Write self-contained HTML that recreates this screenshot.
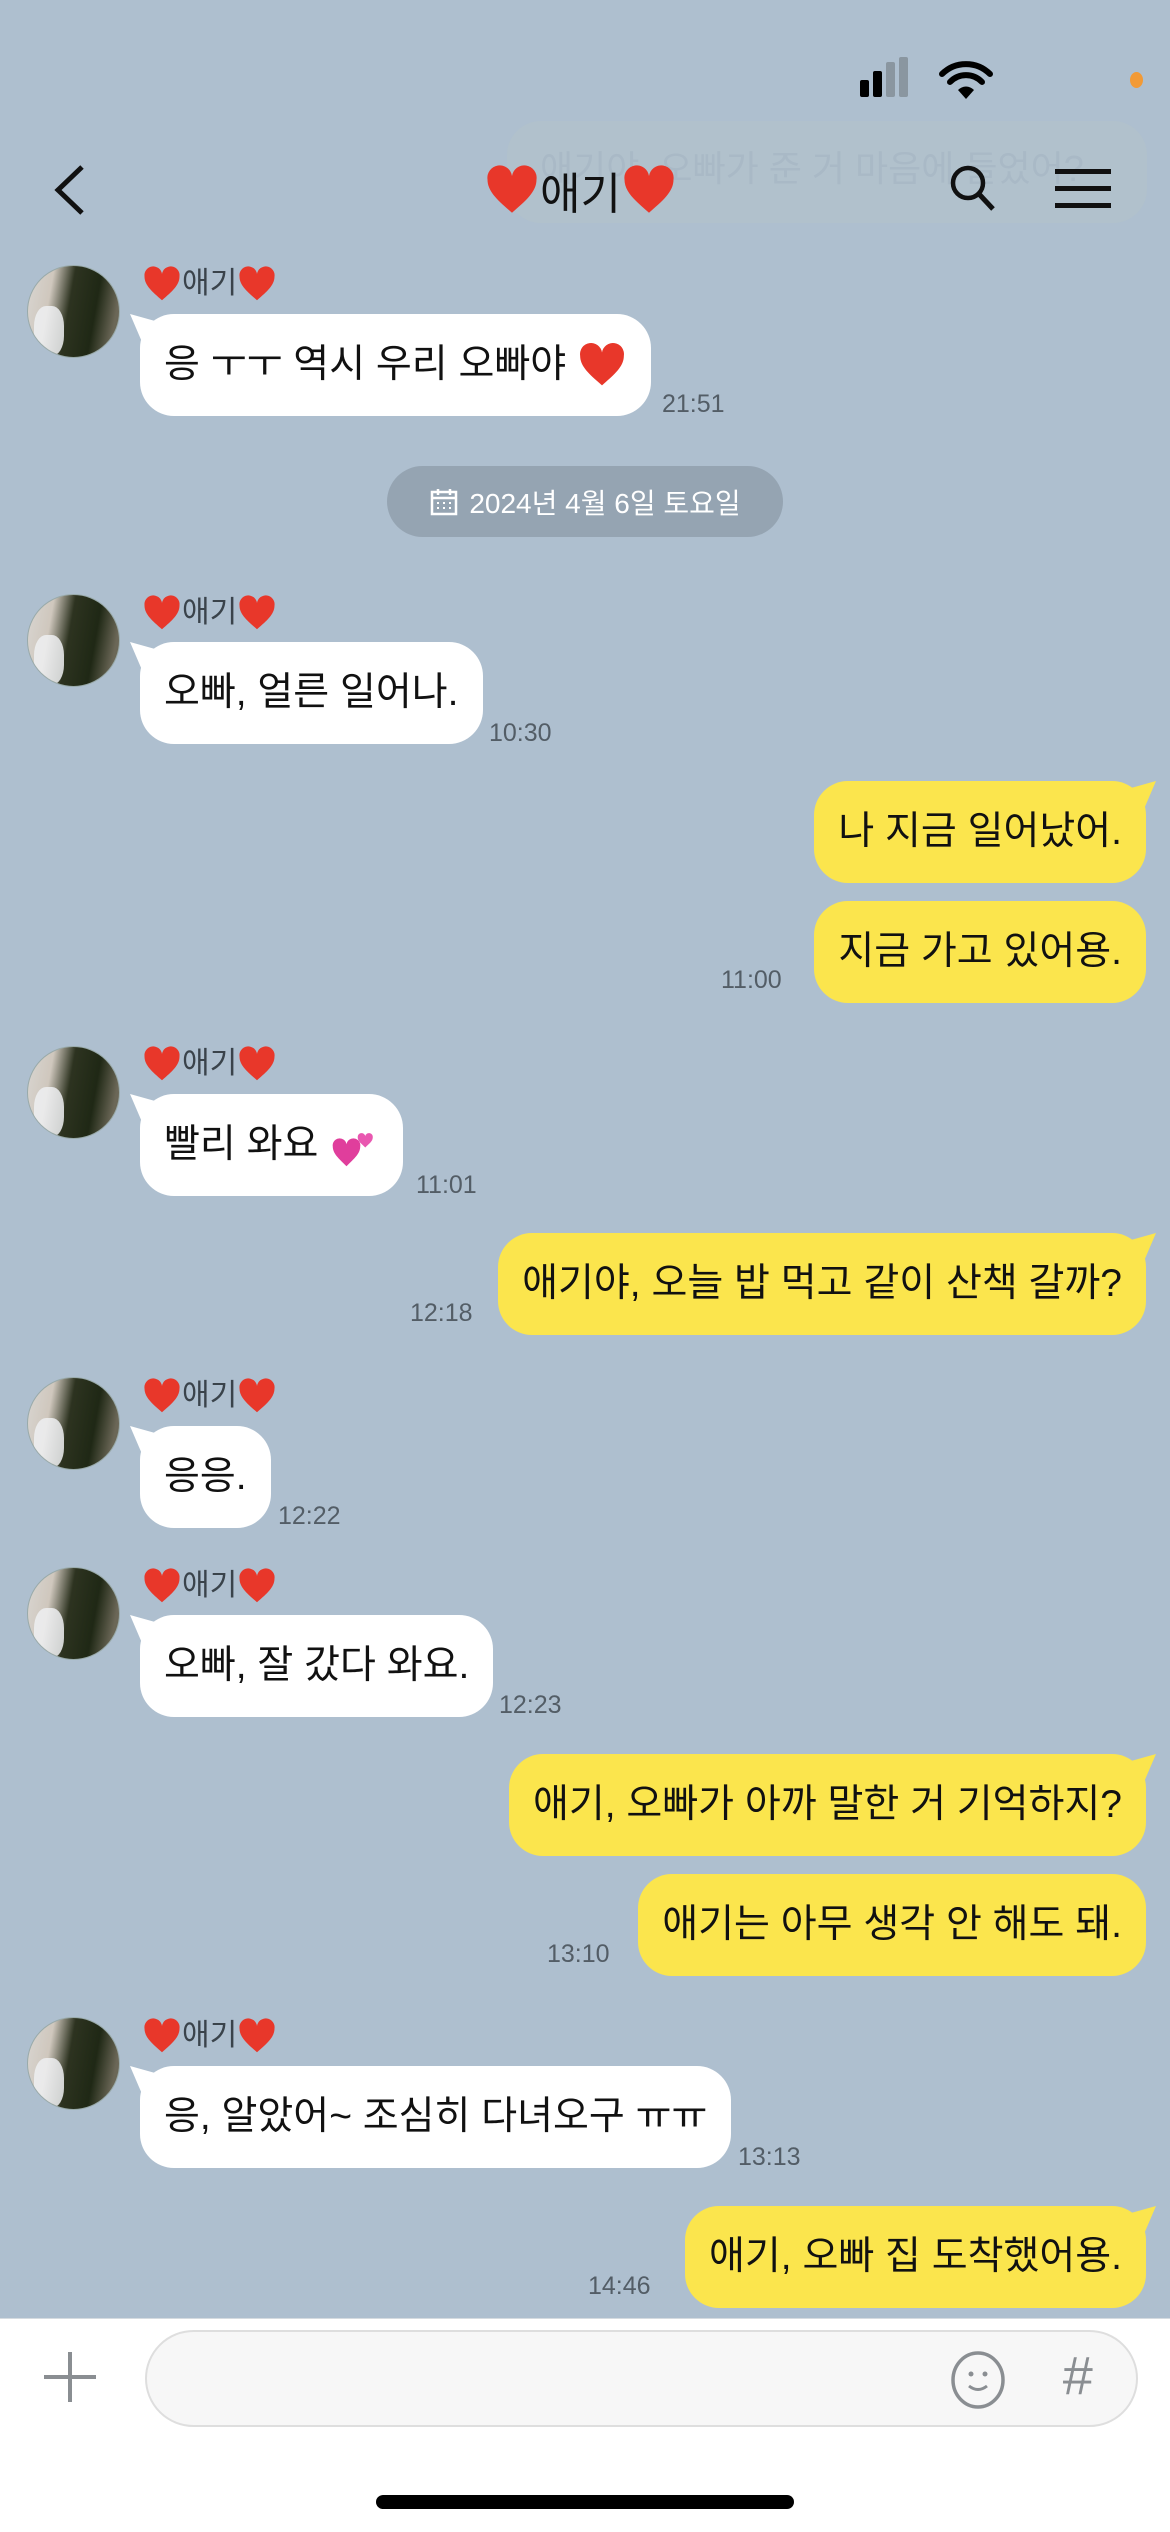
<!DOCTYPE html>
<html><head><meta charset="utf-8">
<style>
*{margin:0;padding:0;box-sizing:border-box}
body{width:1170px;height:2532px;background:#aebfcf;position:relative;overflow:hidden;font-family:"Liberation Sans","Noto Sans CJK KR",sans-serif;color:#111}
.a{position:absolute}
.av{position:absolute;left:27px;width:93px;height:93px;border-radius:50%;overflow:hidden;background:linear-gradient(100deg,#d9d6d2 0%,#cfc7bd 25%,#2d3320 45%,#1f2815 70%,#6b6757 90%);border:1px solid #9aa}
.av:after{content:"";position:absolute;left:6px;top:40px;width:30px;height:50px;border-radius:40%;background:#eef0f2;opacity:.85}
.nm{position:absolute;left:142px;font-size:30px;color:#3a434b;height:40px;line-height:40px;display:flex;align-items:center}
.b{position:absolute;height:102px;line-height:102px;font-size:39px;padding:0 24px;border-radius:34px;white-space:nowrap;display:flex;align-items:center}
.w{background:#fff;left:140px}
.y{background:#fbe54d;right:24px}
.tl:before{content:"";position:absolute;left:-10px;top:0;width:30px;height:28px;background:inherit;clip-path:polygon(0 0,100% 30%,100% 100%,40% 100%)}
.tr:before{content:"";position:absolute;right:-10px;top:0;width:30px;height:28px;background:inherit;clip-path:polygon(100% 0,0 30%,0 100%,60% 100%)}
.t{position:absolute;font-size:25px;color:#535d66}
svg.h{display:inline-block;vertical-align:middle}
</style></head><body>

<!-- ghost bubble -->
<div class="a" style="left:507px;top:121px;width:640px;height:102px;border-radius:34px;background:#b2c2ca;opacity:.7"></div>
<div class="a" style="left:540px;top:140px;font-size:36px;color:#a9b9c6">애기야, 오빠가 준 거 마음에 들었어?</div>

<!-- status bar -->
<div class="a" style="left:860px;top:80px;width:9px;height:17px;background:#000;border-radius:2px"></div>
<div class="a" style="left:873px;top:71px;width:9px;height:26px;background:#000;border-radius:2px"></div>
<div class="a" style="left:886px;top:62px;width:9px;height:35px;background:#8a96a0;border-radius:2px"></div>
<div class="a" style="left:899px;top:57px;width:9px;height:40px;background:#8a96a0;border-radius:2px"></div>
<svg class="a" style="left:938px;top:58px" width="56" height="42" viewBox="0 0 56 42"><path d="M4 16a34 34 0 0 1 48 0" stroke="#000" stroke-width="6" fill="none" stroke-linecap="round"/><path d="M12 24a22 22 0 0 1 32 0" stroke="#000" stroke-width="6" fill="none" stroke-linecap="round"/><path d="M20 32a11 11 0 0 1 16 0L28 41z" fill="#000"/></svg>
<div class="a" style="left:1130px;top:72px;width:13px;height:16px;border-radius:50%;background:#f29a36"></div>

<!-- header -->
<svg class="a" style="left:52px;top:163px" width="36" height="54" viewBox="0 0 36 54"><path d="M30 4L6 27l24 23" stroke="#111" stroke-width="5" fill="none"/></svg>
<div class="a" style="left:484px;top:160px;height:60px;display:flex;align-items:center;font-size:44px;color:#111">
<svg class="h" width="56" height="56" viewBox="0 0 32 32"><path d="M16 29C8 22 2 17 2 10a7 7 0 0 1 14-2 7 7 0 0 1 14 2c0 7-6 12-14 19z" fill="#e8372a"/></svg>
<span>애기</span>
<svg class="h" width="56" height="56" viewBox="0 0 32 32"><path d="M16 29C8 22 2 17 2 10a7 7 0 0 1 14-2 7 7 0 0 1 14 2c0 7-6 12-14 19z" fill="#e8372a"/></svg>
</div>
<svg class="a" style="left:948px;top:163px" width="50" height="50" viewBox="0 0 50 50"><circle cx="20" cy="20" r="15" stroke="#111" stroke-width="4.5" fill="none"/><path d="M31 31l14 15" stroke="#111" stroke-width="5"/></svg>
<div class="a" style="left:1055px;top:169px;width:56px;height:5px;background:#111"></div>
<div class="a" style="left:1055px;top:186px;width:56px;height:5px;background:#111"></div>
<div class="a" style="left:1055px;top:203px;width:56px;height:5px;background:#111"></div>

<!-- msg 1 -->
<div class="av" style="top:265px"></div>
<div class="nm" style="top:264px"><svg class="h" width="40" height="40" viewBox="0 0 32 32"><path d="M16 29C8 22 2 17 2 10a7 7 0 0 1 14-2 7 7 0 0 1 14 2c0 7-6 12-14 19z" fill="#e8372a"/></svg>애기<svg class="h" width="40" height="40" viewBox="0 0 32 32"><path d="M16 29C8 22 2 17 2 10a7 7 0 0 1 14-2 7 7 0 0 1 14 2c0 7-6 12-14 19z" fill="#e8372a"/></svg></div>
<div class="b w tl" style="top:314px">응 ㅜㅜ 역시 우리 오빠야&nbsp;<svg class="h" width="50" height="50" viewBox="0 0 32 32"><path d="M16 29C8 22 2 17 2 10a7 7 0 0 1 14-2 7 7 0 0 1 14 2c0 7-6 12-14 19z" fill="#e8372a"/></svg></div>
<div class="t" style="left:662px;top:390px">21:51</div>

<!-- date -->
<div class="a" style="left:387px;top:466px;width:396px;height:71px;border-radius:36px;background:#95a4b2;color:#fff;font-size:28px;display:flex;align-items:center;justify-content:center">
<svg width="30" height="30" viewBox="0 0 30 30" style="margin-right:10px"><rect x="3" y="5" width="24" height="22" stroke="#fff" stroke-width="2.5" fill="none"/><path d="M3 11h24M9 2v6M21 2v6" stroke="#fff" stroke-width="2.5"/><path d="M8 16h2M14 16h2M20 16h2M8 21h2M14 21h2M20 21h2" stroke="#fff" stroke-width="2"/></svg>2024년 4월 6일 토요일</div>

<!-- msg 2 -->
<div class="av" style="top:594px"></div>
<div class="nm" style="top:593px"><svg class="h" width="40" height="40" viewBox="0 0 32 32"><path d="M16 29C8 22 2 17 2 10a7 7 0 0 1 14-2 7 7 0 0 1 14 2c0 7-6 12-14 19z" fill="#e8372a"/></svg>애기<svg class="h" width="40" height="40" viewBox="0 0 32 32"><path d="M16 29C8 22 2 17 2 10a7 7 0 0 1 14-2 7 7 0 0 1 14 2c0 7-6 12-14 19z" fill="#e8372a"/></svg></div>
<div class="b w tl" style="top:642px">오빠, 얼른 일어나.</div>
<div class="t" style="left:489px;top:719px">10:30</div>

<div class="b y tr" style="top:781px">나 지금 일어났어.</div>
<div class="b y" style="top:901px">지금 가고 있어용.</div>
<div class="t" style="left:721px;top:966px">11:00</div>

<!-- msg 3 -->
<div class="av" style="top:1046px"></div>
<div class="nm" style="top:1044px"><svg class="h" width="40" height="40" viewBox="0 0 32 32"><path d="M16 29C8 22 2 17 2 10a7 7 0 0 1 14-2 7 7 0 0 1 14 2c0 7-6 12-14 19z" fill="#e8372a"/></svg>애기<svg class="h" width="40" height="40" viewBox="0 0 32 32"><path d="M16 29C8 22 2 17 2 10a7 7 0 0 1 14-2 7 7 0 0 1 14 2c0 7-6 12-14 19z" fill="#e8372a"/></svg></div>
<div class="b w tl" style="top:1094px">빨리 와요&nbsp;<svg class="h" width="50" height="50" viewBox="0 0 40 40"><path d="M14 37C8 31 3 27 3 21a5.5 5.5 0 0 1 11-1.5A5.5 5.5 0 0 1 25 21c0 6-5 10-11 16z" fill="#e03e9c"/><path d="M29 22c-3-3-6-5-6-8a3 3 0 0 1 6-1 3 3 0 0 1 6 1c0 3-3 5-6 8z" fill="#e957b0"/></svg></div>
<div class="t" style="left:416px;top:1171px">11:01</div>

<div class="b y tr" style="top:1233px">애기야, 오늘 밥 먹고 같이 산책 갈까?</div>
<div class="t" style="left:410px;top:1299px">12:18</div>

<!-- msg 4 -->
<div class="av" style="top:1377px"></div>
<div class="nm" style="top:1376px"><svg class="h" width="40" height="40" viewBox="0 0 32 32"><path d="M16 29C8 22 2 17 2 10a7 7 0 0 1 14-2 7 7 0 0 1 14 2c0 7-6 12-14 19z" fill="#e8372a"/></svg>애기<svg class="h" width="40" height="40" viewBox="0 0 32 32"><path d="M16 29C8 22 2 17 2 10a7 7 0 0 1 14-2 7 7 0 0 1 14 2c0 7-6 12-14 19z" fill="#e8372a"/></svg></div>
<div class="b w tl" style="top:1426px">응응.</div>
<div class="t" style="left:278px;top:1502px">12:22</div>

<!-- msg 5 -->
<div class="av" style="top:1567px"></div>
<div class="nm" style="top:1566px"><svg class="h" width="40" height="40" viewBox="0 0 32 32"><path d="M16 29C8 22 2 17 2 10a7 7 0 0 1 14-2 7 7 0 0 1 14 2c0 7-6 12-14 19z" fill="#e8372a"/></svg>애기<svg class="h" width="40" height="40" viewBox="0 0 32 32"><path d="M16 29C8 22 2 17 2 10a7 7 0 0 1 14-2 7 7 0 0 1 14 2c0 7-6 12-14 19z" fill="#e8372a"/></svg></div>
<div class="b w tl" style="top:1615px">오빠, 잘 갔다 와요.</div>
<div class="t" style="left:499px;top:1691px">12:23</div>

<div class="b y tr" style="top:1754px">애기, 오빠가 아까 말한 거 기억하지?</div>
<div class="b y" style="top:1874px">애기는 아무 생각 안 해도 돼.</div>
<div class="t" style="left:547px;top:1940px">13:10</div>

<!-- msg 6 -->
<div class="av" style="top:2017px"></div>
<div class="nm" style="top:2016px"><svg class="h" width="40" height="40" viewBox="0 0 32 32"><path d="M16 29C8 22 2 17 2 10a7 7 0 0 1 14-2 7 7 0 0 1 14 2c0 7-6 12-14 19z" fill="#e8372a"/></svg>애기<svg class="h" width="40" height="40" viewBox="0 0 32 32"><path d="M16 29C8 22 2 17 2 10a7 7 0 0 1 14-2 7 7 0 0 1 14 2c0 7-6 12-14 19z" fill="#e8372a"/></svg></div>
<div class="b w tl" style="top:2066px">응, 알았어~ 조심히 다녀오구 ㅠㅠ</div>
<div class="t" style="left:738px;top:2143px">13:13</div>

<div class="b y tr" style="top:2206px">애기, 오빠 집 도착했어용.</div>
<div class="t" style="left:588px;top:2272px">14:46</div>

<!-- bottom bar -->
<div class="a" style="left:0;top:2318px;width:1170px;height:214px;background:#fff;border-top:1px solid #d5dbe0"></div>
<div class="a" style="left:44px;top:2375px;width:52px;height:4px;background:#8a8e92"></div>
<div class="a" style="left:68px;top:2352px;width:4px;height:50px;background:#8a8e92"></div>
<div class="a" style="left:145px;top:2330px;width:993px;height:97px;border-radius:49px;background:#f7f7f7;border:2px solid #dedede"></div>
<svg class="a" style="left:950px;top:2350px" width="56" height="60" viewBox="0 0 56 60"><ellipse cx="28" cy="30" rx="25" ry="27" stroke="#8a8e92" stroke-width="3.5" fill="none"/><circle cx="21" cy="24" r="2.5" fill="#8a8e92"/><circle cx="35" cy="24" r="2.5" fill="#8a8e92"/><path d="M19 36q9 7 18 0" stroke="#8a8e92" stroke-width="3" fill="none"/></svg>
<div class="a" style="left:1062px;top:2345px;font-size:54px;color:#8a8e92;font-style:italic">#</div>
<div class="a" style="left:376px;top:2495px;width:418px;height:14px;border-radius:7px;background:#000"></div>
</body></html>
